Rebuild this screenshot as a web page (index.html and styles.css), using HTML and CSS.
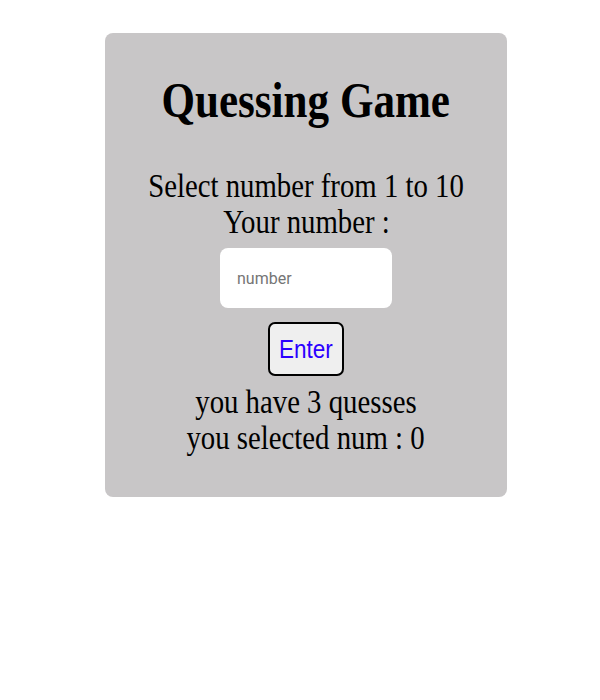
FILE: index.html
```html
<!DOCTYPE html>
<html>
<head>
<meta charset="utf-8">
<link rel="stylesheet" href="styles.css">
</head>
<body>
<div class="page">
  <div class="card">
    <h1 class="title"><span class="squash">Quessing Game</span></h1>
    <p class="line"><span class="squash">Select number from 1 to 10</span></p>
    <p class="line"><span class="squash">Your number :</span></p>
    <input class="num" type="text" placeholder="number">
    <button class="enter"><span class="squash">Enter</span></button>
    <p class="line gap"><span class="squash">you have 3 quesses</span></p>
    <p class="line"><span class="squash">you selected num : 0</span></p>
  </div>
</div>
</body>
</html>
```
FILE: styles.css
```css
html, body {
  margin: 0;
  padding: 0;
  background: #ffffff;
}
.page {
  padding: 33px 0 0 105px;
}
.card {
  width: 402px;
  height: 464px;
  box-sizing: border-box;
  background: #c8c6c7;
  border-radius: 8px;
  display: flex;
  flex-direction: column;
  align-items: center;
  padding-top: 39px;
  font-family: "Liberation Serif", "Times New Roman", serif;
  color: #000;
}
.squash {
  display: inline-block;
  transform: scaleX(0.872);
  white-space: nowrap;
}
.title {
  margin: 0 0 40px 0;
  font-size: 51px;
  font-weight: bold;
  line-height: 56px;
}
.title .squash {
  transform: scaleX(0.845);
}
.line {
  margin: 0;
  font-size: 33px;
  line-height: 36px;
}
.gap {
  margin-top: 8px;
}
.num {
  margin-top: 8px;
  width: 172px;
  height: 60px;
  box-sizing: border-box;
  border: none;
  border-radius: 8px;
  background: #fff;
  padding: 0 17px;
  font-family: "Roboto", "Liberation Sans", sans-serif;
  font-size: 16px;
  outline: none;
}
.num::placeholder {
  color: #757575;
}
.enter {
  margin-top: 14px;
  width: 76px;
  height: 54px;
  box-sizing: border-box;
  border: 2px solid #000;
  border-radius: 7px;
  background: #efefef;
  color: #2b00ff;
  font-family: "Liberation Sans", Arial, sans-serif;
  font-size: 25px;
  padding: 0;
}
.enter .squash {
  transform: scaleX(0.9);
}
```
